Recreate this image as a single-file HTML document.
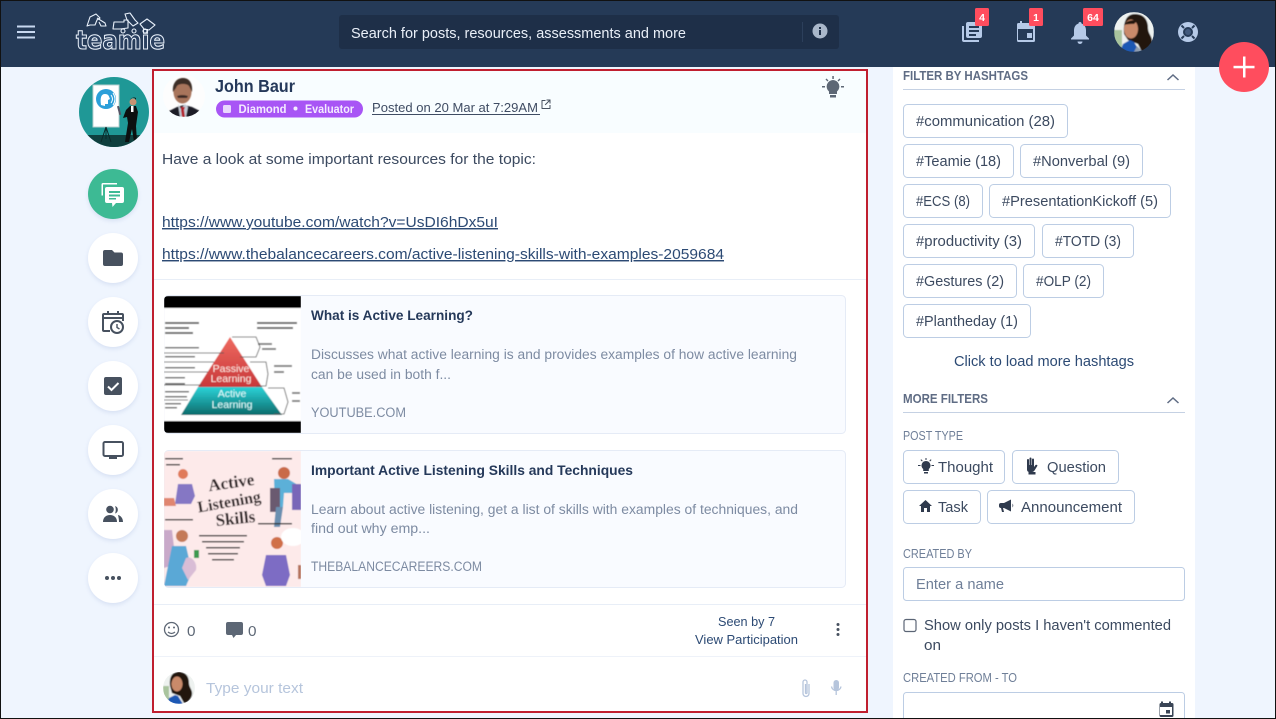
<!DOCTYPE html>
<html lang="en"><head><meta charset="utf-8"><title>Teamie</title>
<style>
html,body{margin:0;padding:0;background:#eff5fe;width:1276px;height:719px;overflow:hidden}
svg{display:block;position:absolute;left:0;top:0}
text{font-family:"Liberation Sans","DejaVu Sans",sans-serif;font-size:14.5px;fill:#3c4a60}
.chip{fill:#fff;stroke:#bccde4;stroke-width:1}
.c{fill:#3c4a60;font-size:14.5px}
.h{font-weight:bold;font-size:12.5px;fill:#5f6c84}
.l{font-size:12.5px;fill:#6f7f98}
.d{font-size:13.5px;fill:#7d8ba2}
.t{font-weight:bold;font-size:13.5px;fill:#25395a}
.a{fill:#2c4a74;text-decoration:underline;font-size:14.5px}
.ic{fill:#47515f}
.tb{fill:#b6cae8}
.bd{fill:#fff;font-weight:bold;font-size:10.5px}
</style></head><body>
<svg width="1276" height="719" viewBox="0 0 1276 719" xmlns="http://www.w3.org/2000/svg">
<defs>
<filter id="s" x="-30%" y="-30%" width="160%" height="160%"><feDropShadow dx="0" dy="2" stdDeviation="2" flood-color="#b9c8e6" flood-opacity=".45"/></filter>
<filter id="b"><feGaussianBlur stdDeviation=".5"/></filter>
<clipPath id="cJ"><circle cx="184" cy="96" r="21"/></clipPath>
<clipPath id="cT"><circle cx="114" cy="112" r="35"/></clipPath>
<clipPath id="cU"><circle cx="1134" cy="32" r="20"/></clipPath>
<clipPath id="cV"><circle cx="179" cy="688" r="16"/></clipPath>
<clipPath id="i1"><path d="M168 296H301V433H168a4 4 0 0 1-4-4V300a4 4 0 0 1 4-4z"/></clipPath>
<clipPath id="i2"><path d="M168 451H301V587H168a4 4 0 0 1-4-4V455a4 4 0 0 1 4-4z"/></clipPath>
<linearGradient id="gr" x1="0" y1="0" x2="0" y2="1"><stop offset="0" stop-color="#ee6a60"/><stop offset="1" stop-color="#c8383a"/></linearGradient>
<linearGradient id="gt" x1="0" y1="0" x2="0" y2="1"><stop offset="0" stop-color="#2bd3d8"/><stop offset="1" stop-color="#0c6b6b"/></linearGradient>
</defs>

<!-- header -->
<rect x="0" y="0" width="1276" height="67" fill="#253a57"/>
<g fill="#c8d8f0"><rect x="17" y="25.5" width="18" height="2"/><rect x="17" y="31" width="18" height="2"/><rect x="17" y="36.5" width="18" height="2"/></g>

<!-- logo -->
<text x="76" y="49" textLength="89" lengthAdjust="spacingAndGlyphs" style="font-family:'DejaVu Sans',sans-serif;font-size:26px;font-weight:bold;fill:#2a4060;stroke:#e8f0fa;stroke-width:1.100">teamie</text>
<g fill="none" stroke="#e8f0fa" stroke-width="1.100" stroke-linejoin="round">
<path d="M87 26l3-9 6-3 4 4-3 2-2 5-5 0z"/><path d="M97 18l8 5 1 3-5 0-2-4"/>
<path d="M113 29l1-7 10 0 0-2 4 0 0 8-8 1z"/><path d="M125 14l5-1 5 7 3 3-5 3-6-6z"/><path d="M140 24l7-5 8 6-6 5-5-1z"/>
<circle cx="123" cy="31" r="2"/><circle cx="134" cy="31" r="2"/><circle cx="145" cy="31" r="2"/>
</g>

<!-- search -->
<rect x="339" y="15" width="500" height="34" rx="3" fill="#1e2f48"/>
<text x="351" y="38" textLength="335" lengthAdjust="spacingAndGlyphs" style="fill:#e9eff8">Search for posts, resources, assessments and more</text>
<rect x="802" y="22" width="1" height="20" fill="#2c3f5b"/>
<circle cx="820" cy="31" r="7.5" fill="#a9b7ca"/><rect x="819" y="30" width="2" height="5" fill="#1e2f48"/><rect x="819" y="27" width="2" height="2" fill="#1e2f48"/>

<!-- top icons -->
<g class="tb">
<path d="M962 26h2v14h15v2h-15a2 2 0 0 1-2-2z"/>
<path fill-rule="evenodd" d="M968 22h12a2 2 0 0 1 2 2v12a2 2 0 0 1-2 2h-12a2 2 0 0 1-2-2V24a2 2 0 0 1 2-2zm1 4v2h10v-2zm0 4v2h10v-2zm0 4v2h7v-2z"/>
<path fill-rule="evenodd" d="M1020 21h2v2h8v-2h2v2h1.500a1.500 1.500 0 0 1 1.500 1.500V40.500a1.500 1.500 0 0 1-1.500 1.500h-15a1.500 1.500 0 0 1-1.500-1.500V24.500a1.500 1.500 0 0 1 1.500-1.500H1020zm-2 8v11h15V29zm9 4h5v5h-5z"/>
<path d="M1080 22c1 0 1.500.6 1.500 1.500 3 1 4.500 3.500 4.500 7v5l3 3v1h-18v-1l3-3v-5c0-3.500 1.500-6 4.500-7 0-.9.500-1.500 1.500-1.500z"/><path d="M1077.500 41.500h5a2.500 2.500 0 0 1-5 0z"/>
</g>
<rect x="975" y="8" width="14" height="18" rx="1.500" fill="#ff4d5e"/><text x="982" y="21" text-anchor="middle" class="bd">4</text>
<rect x="1029" y="8" width="14" height="18" rx="1.500" fill="#ff4d5e"/><text x="1036" y="21" text-anchor="middle" class="bd">1</text>
<rect x="1083" y="8" width="20" height="18" rx="1.500" fill="#ff4d5e"/><text x="1093" y="21" text-anchor="middle" class="bd">64</text>

<!-- user avatar -->
<g clip-path="url(#cU)" filter="url(#b)">
<rect x="1114" y="12" width="40" height="40" fill="#eef2f0"/>
<path d="M1114 30h8v22h-8z" fill="#a9c49e"/>
<path d="M1124 34c-1-13 3-20 11-20 9 0 13 6 13 14 0 6 5 9 4 15-1 5-5 9-10 9l-4-8-10-4z" fill="#20120f"/>
<ellipse cx="1131" cy="29" rx="7" ry="9.500" fill="#c98a6a"/>
<path d="M1124 25c2-4 8-6 13-4l-3 3c-3 0-7 0-10 1z" fill="#20120f"/>
<path d="M1120 52l3-8 7-4 4 2 6 10z" fill="#1d58b4"/>
<path d="M1134 52l3-6 6 6z" fill="#8f9db0"/>
</g>
<circle cx="1188" cy="32" r="10" fill="#b6cae8"/>
<circle cx="1188" cy="32" r="5" fill="#253a57"/><circle cx="1188" cy="32" r="3" fill="#41597d"/>
<g stroke="#253a57" stroke-width="2"><path d="M1181.500 25.500l2.500 2.500M1194.500 25.500l-2.500 2.500M1181.500 38.500l2.500-2.500M1194.500 38.500l-2.500-2.500"/></g>

<!-- left rail -->
<circle cx="114" cy="112" r="35" fill="#1f9896"/>
<g clip-path="url(#cT)">
<rect x="79" y="135" width="70" height="15" fill="#0f3f3e"/>
<rect x="93" y="85" width="26" height="42" fill="#fff" stroke="#b8d0d0"/>
<path d="M106 127l-5 15M106 127l5 15M106 127v12" stroke="#0a2a2a" stroke-width="1"/>
<circle cx="106" cy="99" r="10" fill="#2c9fd9"/><path d="M101 105c-1-7 0-11 4-11s4 3 5 5l-2 1 0 4-3 0 0 2z" fill="#fff"/>
<path d="M111 95q3 4 0 8M113 93q4 6 0 12" stroke="#fff" fill="none"/>
<path d="M126 110l4-4 6 0 2 6-2 14 1 16h-3l-2-13-3 13h-4l3-19-1-6-4 1z" fill="#0c1010"/>
<circle cx="133" cy="102" r="3.500" fill="#c89373"/><path d="M130 100q3-5 6 0l0-2-3-1z" fill="#111"/>
<rect x="118" y="106" width="2" height="9" fill="#556" transform="rotate(-15 119 110)"/>
<rect x="131" y="106" width="2.500" height="6" fill="#fff"/>
</g>
<circle cx="113" cy="194" r="25" fill="#3dba94" filter="url(#s)"/>
<g fill="#fff">
<path d="M103 183h14v1.500h-14v11h-1.500v-11a1.500 1.500 0 0 1 1.500-1.500z"/>
<path fill-rule="evenodd" d="M107 187h15a2 2 0 0 1 2 2v12a2 2 0 0 1-2 2h-6l-3.500 4-.5-4h-5a2 2 0 0 1-2-2v-12a2 2 0 0 1 2-2zm2 4v2h11v-2zm0 3.500v2h11v-2zm0 3.500v1.500h7v-1.500z"/>
</g>
<g fill="#fff" filter="url(#s)">
<circle cx="113" cy="258" r="25"/><circle cx="113" cy="322" r="25"/><circle cx="113" cy="386" r="25"/><circle cx="113" cy="450" r="25"/><circle cx="113" cy="514" r="25"/><circle cx="113" cy="578" r="25"/>
</g>
<path class="ic" d="M105 250h7l2.500 2.500H121a2 2 0 0 1 2 2V264a2 2 0 0 1-2 2h-16a2 2 0 0 1-2-2v-12a2 2 0 0 1 2-2z"/>
<!-- calendar clock -->
<path class="ic" fill-rule="evenodd" d="M107 311h2v2h8v-2h2v2h3a2 2 0 0 1 2 2v6h-2v-2h-18v11h6v2h-6a2 2 0 0 1-2-2V315a2 2 0 0 1 2-2h3zm-3 4v2h18v-2z"/>
<circle cx="117" cy="327" r="6" fill="#fff" stroke="#47515f" stroke-width="2"/><path d="M117 324v3.500l2.500 1.500" stroke="#47515f" stroke-width="1.400" fill="none"/>
<!-- check -->
<rect x="104" y="377" width="18" height="18" rx="2" class="ic"/><path d="M108 386.500l3.500 3.500 7-7" fill="none" stroke="#fff" stroke-width="2"/>
<!-- monitor -->
<rect x="103.500" y="442" width="19.500" height="14" rx="1.500" fill="none" stroke="#47515f" stroke-width="2"/><rect x="109" y="457" width="8" height="2" class="ic"/>
<!-- people -->
<circle cx="110" cy="509.500" r="3.800" class="ic"/><path class="ic" d="M103 522c0-4.500 3-7 7-7s7 2.500 7 7z"/><path class="ic" d="M115 506a3.900 3.900 0 0 1 0 7.500c1-2 1-5.500 0-7.500zM118 515c2.500.5 5 3 5 7h-4c0-2.500-.5-5-1-7z"/>
<circle cx="107" cy="578" r="2" class="ic"/><circle cx="113" cy="578" r="2" class="ic"/><circle cx="119" cy="578" r="2" class="ic"/>

<!-- post card -->
<rect x="153" y="70" width="714" height="642" fill="#fff" stroke="#c01f2f" stroke-width="2"/>
<rect x="154" y="71" width="712" height="62" fill="#f8fdff"/>
<circle cx="184" cy="96" r="21" fill="#fdfdfd"/>
<g clip-path="url(#cJ)" filter="url(#b)">
<path d="M166 117l3-6 8-4 7-2 8 2 8 4 3 6z" fill="#1c1f28"/>
<path d="M178 104l3 5 4-5 3 3-2 10h-6z" fill="#c4cbd6"/><path d="M181 107h4l-1 3 1 7h-3l-1-7z" fill="#b3202b"/>
<ellipse cx="182.500" cy="92" rx="9" ry="11.500" fill="#a8745c"/>
<path d="M173 92c-1-9 4-14 10-14s10 5 9 14l-2-4c-1-3-3-4-7-4s-6 1-7 4z" fill="#3d2e28"/>
<path d="M177 96q5-2 11 0l-1 2h-9z" fill="#3b2b26"/>
</g>
<text x="215" y="92" textLength="80" lengthAdjust="spacingAndGlyphs" style="font-size:17.500px;font-weight:bold;fill:#25395a">John Baur</text>
<rect x="216" y="100.500" width="147" height="17" rx="8.500" fill="#a855f5"/>
<rect x="223" y="105" width="8" height="8" rx="1.500" fill="#e9d8fd"/>
<text x="238.500" y="113" textLength="48" lengthAdjust="spacingAndGlyphs" style="font-size:11.500px;fill:#f4ecff;font-weight:bold">Diamond</text>
<circle cx="295.500" cy="108.500" r="2" fill="#f4ecff"/>
<text x="305" y="113" textLength="49" lengthAdjust="spacingAndGlyphs" style="font-size:11.500px;fill:#f4ecff;font-weight:bold">Evaluator</text>
<text x="372" y="112" textLength="166" lengthAdjust="spacingAndGlyphs" style="font-size:12.500px;fill:#3f4c63">Posted on 20 Mar at 7:29AM</text>
<rect x="372" y="114" width="168" height="1" fill="#3f4c63"/>
<path d="M542 100h3.500v1h-3v7h7v-3h1v3.500a.5.5 0 0 1-.5.5h-8a.5.5 0 0 1-.5-.5v-8a.5.5 0 0 1 .5-.5zM546.500 99.500h4v4h-1v-2.300l-4 4-.7-.7 4-4h-2.300z" fill="#47515f"/>
<!-- bulb -->
<g fill="#5d6775"><path d="M833 80a6.500 6.500 0 0 1 4 11.500V94h-8v-2.500A6.500 6.500 0 0 1 833 80z"/><rect x="830" y="95" width="6" height="2.500"/>
<rect x="832.300" y="76" width="1.500" height="3"/><rect x="822" y="86" width="3" height="1.500"/><rect x="841" y="86" width="3" height="1.500"/><path d="M825.500 79.500l1-1 2 2-1 1zM840.500 79.500l-1-1-2 2 1 1z"/></g>

<text x="162" y="164" textLength="374" lengthAdjust="spacingAndGlyphs">Have a look at some important resources for the topic:</text>
<text x="162" y="227" textLength="336" lengthAdjust="spacingAndGlyphs" class="a">https://www.youtube.com/watch?v=UsDI6hDx5uI</text>
<text x="162" y="259" textLength="562" lengthAdjust="spacingAndGlyphs" class="a">https://www.thebalancecareers.com/active-listening-skills-with-examples-2059684</text>
<rect x="154" y="279" width="712" height="1" fill="#e8eef7"/>

<!-- link card 1 -->
<rect x="164.500" y="295.500" width="681" height="138" rx="4" fill="#f9fbff" stroke="#e5ebf6"/>
<g clip-path="url(#i1)"><g filter="url(#b)">
<rect x="164" y="296" width="137" height="137" fill="#fff"/>
<rect x="164" y="296" width="137" height="12" fill="#000"/><rect x="164" y="421" width="137" height="12" fill="#000"/>
<path d="M230 337l32 50h-64z" fill="url(#gr)"/>
<path d="M198 387h64l20 28H181z" fill="url(#gt)"/>
<text x="231" y="372" text-anchor="middle" style="font-size:10.500px;fill:#ffe7e0">Passive</text>
<text x="231" y="382" text-anchor="middle" style="font-size:10.500px;fill:#ffe7e0">Learning</text>
<text x="232" y="397" text-anchor="middle" style="font-size:10.500px;fill:#dff">Active</text>
<text x="232" y="408" text-anchor="middle" style="font-size:10.500px;fill:#dff">Learning</text>
<g fill="#333" opacity=".75"><rect x="165" y="322" width="34" height="2"/><rect x="165" y="327" width="24" height="2"/><rect x="165" y="332" width="28" height="2"/><rect x="257" y="322" width="40" height="2"/><rect x="257" y="327" width="36" height="2"/>
<rect x="165" y="347" width="34" height="1.500"/><rect x="165" y="356" width="30" height="1.500"/><rect x="165" y="367" width="30" height="1.500"/><rect x="165" y="377" width="20" height="1.500"/><rect x="165" y="383" width="20" height="1.500"/><rect x="165" y="391" width="24" height="1.500"/><rect x="165" y="396" width="22" height="1.500"/><rect x="165" y="403" width="16" height="1.500"/><rect x="165" y="407" width="12" height="1.500"/></g>
<g stroke="#555" fill="none" opacity=".8"><path d="M164 353h60M164 362h50M164 372h44M164 385h38M164 400h24"/><path d="M232 337h24l4 10-4 10h-16M250 362h16l2 12-2 12h-10M268 388h16l4 14-4 12h-10"/></g>
<g fill="#333" opacity=".6"><rect x="258" y="343" width="14" height="2"/><rect x="262" y="348" width="14" height="2"/><rect x="274" y="365" width="18" height="2"/><rect x="274" y="371" width="10" height="2"/><rect x="292" y="392" width="8" height="2"/><rect x="292" y="400" width="8" height="2"/></g>
</g></g>
<text x="311" y="320" textLength="162" lengthAdjust="spacingAndGlyphs" class="t">What is Active Learning?</text>
<text x="311" y="359" textLength="486" lengthAdjust="spacingAndGlyphs" class="d">Discusses what active learning is and provides examples of how active learning</text>
<text x="311" y="379" textLength="140" lengthAdjust="spacingAndGlyphs" class="d">can be used in both f...</text>
<text x="311" y="417" textLength="95" lengthAdjust="spacingAndGlyphs" class="d">YOUTUBE.COM</text>

<!-- link card 2 -->
<rect x="164.500" y="450.500" width="681" height="137" rx="4" fill="#f9fbff" stroke="#e5ebf6"/>
<g clip-path="url(#i2)"><g filter="url(#b)">
<rect x="164" y="451" width="137" height="136" fill="#fdeaea"/>
<text x="232" y="488" text-anchor="middle" style="font-family:'Liberation Serif',serif;font-size:17px;font-weight:bold;fill:#2b2024" transform="rotate(-8 232 488)">Active</text>
<text x="230" y="507" text-anchor="middle" style="font-family:'Liberation Serif',serif;font-size:16px;font-weight:bold;fill:#2b2024" transform="rotate(-10 230 507)">Listening</text>
<text x="236" y="524" text-anchor="middle" style="font-family:'Liberation Serif',serif;font-size:17px;font-weight:bold;fill:#2b2024" transform="rotate(-6 236 524)">Skills</text>
<circle cx="183" cy="474" r="5" fill="#e07a5a"/><path d="M175 504l3-20h14l3 12-4 8z" fill="#8577c4"/><path d="M164 498h10l2 8h-12z" fill="#e08670"/>
<circle cx="284" cy="473" r="6" fill="#c96b4a"/><path d="M274 479h14l10 6v8h-14l-1 14h-8z" fill="#5bb0d8"/><path d="M270 488h10v24h-10z" fill="#6a5a70"/><path d="M283 507h-7l-2 20h6z" fill="#6a8fb0"/><rect x="292" y="484" width="9" height="26" fill="#7966b8"/>
<circle cx="182" cy="536" r="6" fill="#c47a58"/><path d="M164 530h8l4 34-12 4z" fill="#c9a9c9"/><path d="M172 546h14l6 26-6 14h-22l4-20z" fill="#5aa8d6"/><path d="M186 558a8 10 0 0 1 10 12l-8 10-6-12z" fill="#d9bdd6"/><rect x="194" y="550" width="5" height="8" fill="#3c9a4f"/>
<circle cx="277" cy="543" r="6" fill="#d0704a"/><path d="M266 555h20l4 20-4 11h-20l-4-11z" fill="#7d6cc4"/><ellipse cx="293" cy="537" rx="12" ry="9" fill="#fff"/><rect x="298" y="565" width="3" height="14" fill="#b5735c"/>
<g fill="#333"><rect x="199" y="535" width="48" height="1.500"/><rect x="202" y="541" width="42" height="1.500"/><rect x="206" y="547" width="34" height="1.500"/><rect x="208" y="553" width="30" height="1.500"/><rect x="212" y="559" width="22" height="1.500"/><rect x="165" y="458" width="18" height="1.500"/><rect x="166" y="464" width="14" height="1.500"/><rect x="272" y="458" width="20" height="1.500"/><rect x="165" y="519" width="28" height="1.500"/><rect x="258" y="523" width="34" height="1.500"/></g>
</g></g>
<text x="311" y="475" textLength="322" lengthAdjust="spacingAndGlyphs" class="t">Important Active Listening Skills and Techniques</text>
<text x="311" y="514" textLength="487" lengthAdjust="spacingAndGlyphs" class="d">Learn about active listening, get a list of skills with examples of techniques, and</text>
<text x="311" y="533" textLength="119" lengthAdjust="spacingAndGlyphs" class="d">find out why emp...</text>
<text x="311" y="571" textLength="171" lengthAdjust="spacingAndGlyphs" class="d">THEBALANCECAREERS.COM</text>

<rect x="154" y="604" width="712" height="1" fill="#e8eef7"/>
<!-- footer actions -->
<circle cx="171.500" cy="629.500" r="7" fill="none" stroke="#5d6775" stroke-width="1.300"/><circle cx="169" cy="627.500" r="1" fill="#5d6775"/><circle cx="174" cy="627.500" r="1" fill="#5d6775"/><path d="M168 632q3.500 3 7 0" fill="none" stroke="#5d6775" stroke-width="1.200"/>
<text x="187" y="636" textLength="8.500" lengthAdjust="spacingAndGlyphs" style="fill:#5d6775">0</text>
<path d="M228 622h13a2 2 0 0 1 2 2v9a2 2 0 0 1-2 2h-5l-2.500 3-1.500-3h-4a2 2 0 0 1-2-2v-9a2 2 0 0 1 2-2z" fill="#5d6775"/>
<text x="248" y="636" textLength="8.500" lengthAdjust="spacingAndGlyphs" style="fill:#5d6775">0</text>
<text x="718" y="626" textLength="57" lengthAdjust="spacingAndGlyphs" style="font-size:12.500px;fill:#2c4a74">Seen by 7</text>
<text x="695" y="644" textLength="103" lengthAdjust="spacingAndGlyphs" style="font-size:12.500px;fill:#2c4a74">View Participation</text>
<g fill="#47515f"><circle cx="838" cy="624.500" r="1.500"/><circle cx="838" cy="629.500" r="1.500"/><circle cx="838" cy="634.500" r="1.500"/></g>
<rect x="154" y="656" width="712" height="1" fill="#eef2f9"/>
<g clip-path="url(#cV)" filter="url(#b)">
<rect x="163" y="672" width="32" height="32" fill="#eef2f0"/><path d="M163 686h6v18h-6z" fill="#a9c49e"/>
<path d="M170 686c-1-9 2-14 9-14 7 0 10 5 10 11 0 5 4 7 3 12-1 4-4 8-8 8l-4-7-8-3z" fill="#20120f"/>
<ellipse cx="177" cy="684" rx="5.500" ry="7.500" fill="#c98a6a"/><path d="M167 704l2-6 6-3 3 1 5 8z" fill="#1d58b4"/>
</g>
<text x="206" y="693" textLength="97" lengthAdjust="spacingAndGlyphs" style="fill:#b6c5dc">Type your text</text>
<path d="M809.500 684v9.500a3 3 0 0 1-6 0V682a2 2 0 0 1 4 0v11a.8.8 0 0 1-1.500 0v-9" transform="translate(-.5 0)" fill="none" stroke="#b6c5dc" stroke-width="1.300"/>
<rect x="833.500" y="680" width="5.500" height="10.500" rx="2.700" fill="#b6c5dc"/><path d="M831.500 686.500a4.800 4.800 0 0 0 9.500 0M836.200 691v4" fill="none" stroke="#b6c5dc" stroke-width="1.300"/>

<!-- right panel -->
<rect x="893" y="67" width="302" height="652" fill="#fff"/>
<text x="903" y="80" textLength="125" lengthAdjust="spacingAndGlyphs" class="h">FILTER BY HASHTAGS</text>
<path d="M1167.500 80l5.500-5 5.500 5" fill="none" stroke="#5f6c84" stroke-width="1.500"/>
<rect x="903" y="89" width="282" height="1" fill="#c5d1e3"/>

<rect class="chip" x="903.500" y="104.500" width="164" height="33" rx="4"/><text class="c" x="916" y="126" textLength="139" lengthAdjust="spacingAndGlyphs">#communication (28)</text>
<rect class="chip" x="903.500" y="144.500" width="110" height="33" rx="4"/><text class="c" x="916" y="166" textLength="85" lengthAdjust="spacingAndGlyphs">#Teamie (18)</text>
<rect class="chip" x="1020.500" y="144.500" width="122" height="33" rx="4"/><text class="c" x="1033" y="166" textLength="97" lengthAdjust="spacingAndGlyphs">#Nonverbal (9)</text>
<rect class="chip" x="903.500" y="184.500" width="79" height="33" rx="4"/><text class="c" x="916" y="206" textLength="54" lengthAdjust="spacingAndGlyphs">#ECS (8)</text>
<rect class="chip" x="989.500" y="184.500" width="181" height="33" rx="4"/><text class="c" x="1002" y="206" textLength="156" lengthAdjust="spacingAndGlyphs">#PresentationKickoff (5)</text>
<rect class="chip" x="903.500" y="224.500" width="131" height="33" rx="4"/><text class="c" x="916" y="246" textLength="106" lengthAdjust="spacingAndGlyphs">#productivity (3)</text>
<rect class="chip" x="1042.500" y="224.500" width="91" height="33" rx="4"/><text class="c" x="1055" y="246" textLength="66" lengthAdjust="spacingAndGlyphs">#TOTD (3)</text>
<rect class="chip" x="903.500" y="264.500" width="113" height="33" rx="4"/><text class="c" x="916" y="286" textLength="88" lengthAdjust="spacingAndGlyphs">#Gestures (2)</text>
<rect class="chip" x="1023.500" y="264.500" width="80" height="33" rx="4"/><text class="c" x="1036" y="286" textLength="55" lengthAdjust="spacingAndGlyphs">#OLP (2)</text>
<rect class="chip" x="903.500" y="304.500" width="127" height="33" rx="4"/><text class="c" x="916" y="326" textLength="102" lengthAdjust="spacingAndGlyphs">#Plantheday (1)</text>
<text x="954" y="366" textLength="180" lengthAdjust="spacingAndGlyphs" style="fill:#2c4a74">Click to load more hashtags</text>

<text x="903" y="403" textLength="85" lengthAdjust="spacingAndGlyphs" class="h">MORE FILTERS</text>
<path d="M1167.500 403l5.500-5 5.500 5" fill="none" stroke="#5f6c84" stroke-width="1.500"/>
<rect x="903" y="412" width="282" height="1" fill="#c5d1e3"/>
<text x="903" y="440" textLength="60" lengthAdjust="spacingAndGlyphs" class="l">POST TYPE</text>

<rect class="chip" x="903.500" y="450.500" width="101" height="33" rx="4"/>
<g fill="#2f3a4d"><path d="M926 461a4.500 4.500 0 0 1 2.800 8v2h-5.600v-2a4.500 4.500 0 0 1 2.800-8z"/><rect x="924" y="472" width="4" height="1.500"/><rect x="925.500" y="458" width="1" height="2"/><rect x="918" y="465" width="2.500" height="1"/><rect x="931.500" y="465" width="2.500" height="1"/><path d="M920.500 460l.7-.7 1.500 1.500-.7.7zM931.500 460l-.7-.7-1.500 1.500.7.7z"/></g>
<text class="c" x="938" y="472" textLength="55" lengthAdjust="spacingAndGlyphs">Thought</text>
<rect class="chip" x="1012.500" y="450.500" width="106" height="33" rx="4"/>
<path fill="#2f3a4d" d="M1029 459.500c.6 0 1 .4 1 1v5h.5v-6.500a1 1 0 0 1 2 0v6.500h.5v-5.500a1 1 0 0 1 2 0v7.500l1.500-2c.5-.7 2.500 0 1.800 1l-2.800 4.500c-.6 1-1.500 1.500-2.500 1.500h-2.500c-1.500 0-2.500-1-2.500-2.500v-9.500c0-.6.400-1 1-1zM1029.500 472.500h7v2.500h-7z" transform="translate(-1 -.5)"/>
<text class="c" x="1047" y="472" textLength="59" lengthAdjust="spacingAndGlyphs">Question</text>
<rect class="chip" x="903.500" y="490.500" width="77" height="33" rx="4"/>
<path fill="#2f3a4d" d="M924.500 500l6.500 6h-2v6h-3v-4h-3v4h-3v-6h-2z" transform="translate(1 0)"/>
<text class="c" x="938" y="512" textLength="30" lengthAdjust="spacingAndGlyphs">Task</text>
<rect class="chip" x="987.500" y="490.500" width="147" height="33" rx="4"/>
<path fill="#2f3a4d" d="M1001 503h3l7-3.500v12l-7-3.500h-1l1 4h-2l-1-4h0a2 2 0 0 1-2-2v-1a2 2 0 0 1 2-2zM1012.500 503.500q1.500 2 0 4z"/>
<text class="c" x="1021" y="512" textLength="101" lengthAdjust="spacingAndGlyphs">Announcement</text>

<text x="903" y="558" textLength="69" lengthAdjust="spacingAndGlyphs" class="l">CREATED BY</text>
<rect class="chip" x="903.500" y="567.500" width="281" height="33" rx="3"/>
<text x="916" y="589" textLength="88" lengthAdjust="spacingAndGlyphs" style="fill:#6f7f98">Enter a name</text>
<rect x="904" y="619.500" width="12" height="12" rx="2" fill="#fff" stroke="#5b6575" stroke-width="1.200"/>
<text class="c" x="924" y="630" textLength="247" lengthAdjust="spacingAndGlyphs">Show only posts I haven't commented</text>
<text class="c" x="924" y="650" textLength="17" lengthAdjust="spacingAndGlyphs">on</text>
<text x="903" y="682" textLength="114" lengthAdjust="spacingAndGlyphs" class="l">CREATED FROM - TO</text>
<rect class="chip" x="903.500" y="692.500" width="281" height="40" rx="3"/>
<path fill="#3a4556" fill-rule="evenodd" d="M1161 701h2v1.500h6V701h2v1.500h1a1.500 1.500 0 0 1 1.500 1.500v11a1.500 1.500 0 0 1-1.500 1.500h-11a1.500 1.500 0 0 1-1.500-1.500v-11a1.500 1.500 0 0 1 1.500-1.500h0zM1160 706.500v8h12v-8zm6 3h4v3.500h-4z" transform="translate(0 .5)"/>

<!-- FAB -->
<circle cx="1244" cy="67" r="25" fill="#ff4d5e"/>
<rect x="1243" y="56.500" width="2.500" height="21" fill="#fff"/><rect x="1233.500" y="65.800" width="21" height="2.500" fill="#fff"/>

<!-- outer edge -->
<rect x=".5" y=".5" width="1275" height="718" fill="none" stroke="#111"/>
</svg>
</body></html>
